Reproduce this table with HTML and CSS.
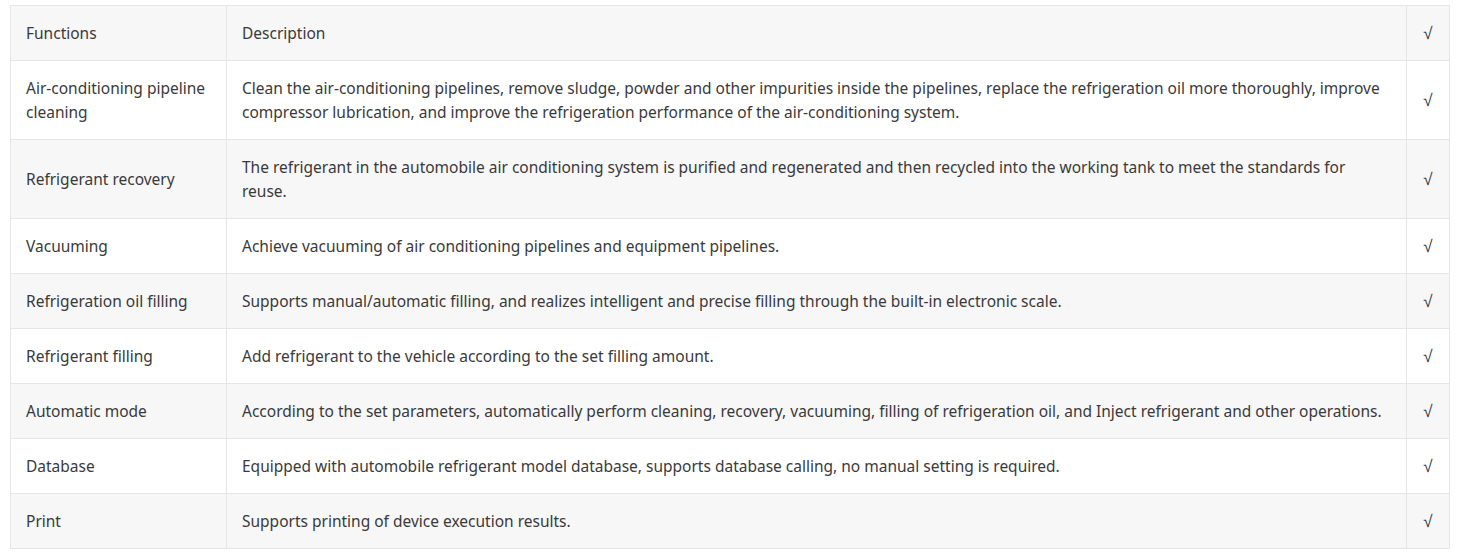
FILE: index.html
```html
<!DOCTYPE html>
<html>
<head>
<meta charset="utf-8">
<link rel="stylesheet" href="styles.css">
</head>
<body>
<table class="spec">
  <colgroup><col class="c1"><col class="c2"><col class="c3"></colgroup>
  <tr><td>Functions</td><td>Description</td><td class="chk">√</td></tr>
  <tr><td>Air-conditioning pipeline cleaning</td><td>Clean the air-conditioning pipelines, remove sludge, powder and other impurities inside the pipelines, replace the refrigeration oil more thoroughly, improve compressor lubrication, and improve the refrigeration performance of the air-conditioning system.</td><td class="chk">√</td></tr>
  <tr><td>Refrigerant recovery</td><td>The refrigerant in the automobile air conditioning system is purified and regenerated and then recycled into the working tank to meet the standards for reuse.</td><td class="chk">√</td></tr>
  <tr><td>Vacuuming</td><td>Achieve vacuuming of air conditioning pipelines and equipment pipelines.</td><td class="chk">√</td></tr>
  <tr><td>Refrigeration oil filling</td><td>Supports manual/automatic filling, and realizes intelligent and precise filling through the built-in electronic scale.</td><td class="chk">√</td></tr>
  <tr><td>Refrigerant filling</td><td>Add refrigerant to the vehicle according to the set filling amount.</td><td class="chk">√</td></tr>
  <tr><td>Automatic mode</td><td>According to the set parameters, automatically perform cleaning, recovery, vacuuming, filling of refrigeration oil, and Inject refrigerant and other operations.</td><td class="chk">√</td></tr>
  <tr><td>Database</td><td>Equipped with automobile refrigerant model database, supports database calling, no manual setting is required.</td><td class="chk">√</td></tr>
  <tr><td>Print</td><td>Supports printing of device execution results.</td><td class="chk">√</td></tr>
</table>
</body>
</html>
```
FILE: styles.css
```css
html, body { margin: 0; padding: 0; background: #fff; }
body { padding: 5px 10px 0 10px; }
.spec {
  width: 1439px;
  border-collapse: collapse;
  table-layout: fixed;
  font-family: "Noto Sans", "Open Sans", sans-serif;
  font-size: 15.5px;
  line-height: 24px;
  color: #3a3a3a;
}
.c1 { width: 216px; }
.c2 { width: 1180px; }
.c3 { width: 43px; }
.spec td {
  border: 1px solid #e6e6e6;
  padding: 15px 15px 15px 15px;
  vertical-align: middle;
}
.spec tr:nth-child(odd) td { background: #f7f7f7; }
.spec tr:nth-child(even) td { background: #fff; }
.spec td.chk {
  padding: 16px 0 14px;
  text-align: center;
  font-family: "Liberation Sans", Arial, sans-serif;
  font-size: 17px;
}
```
